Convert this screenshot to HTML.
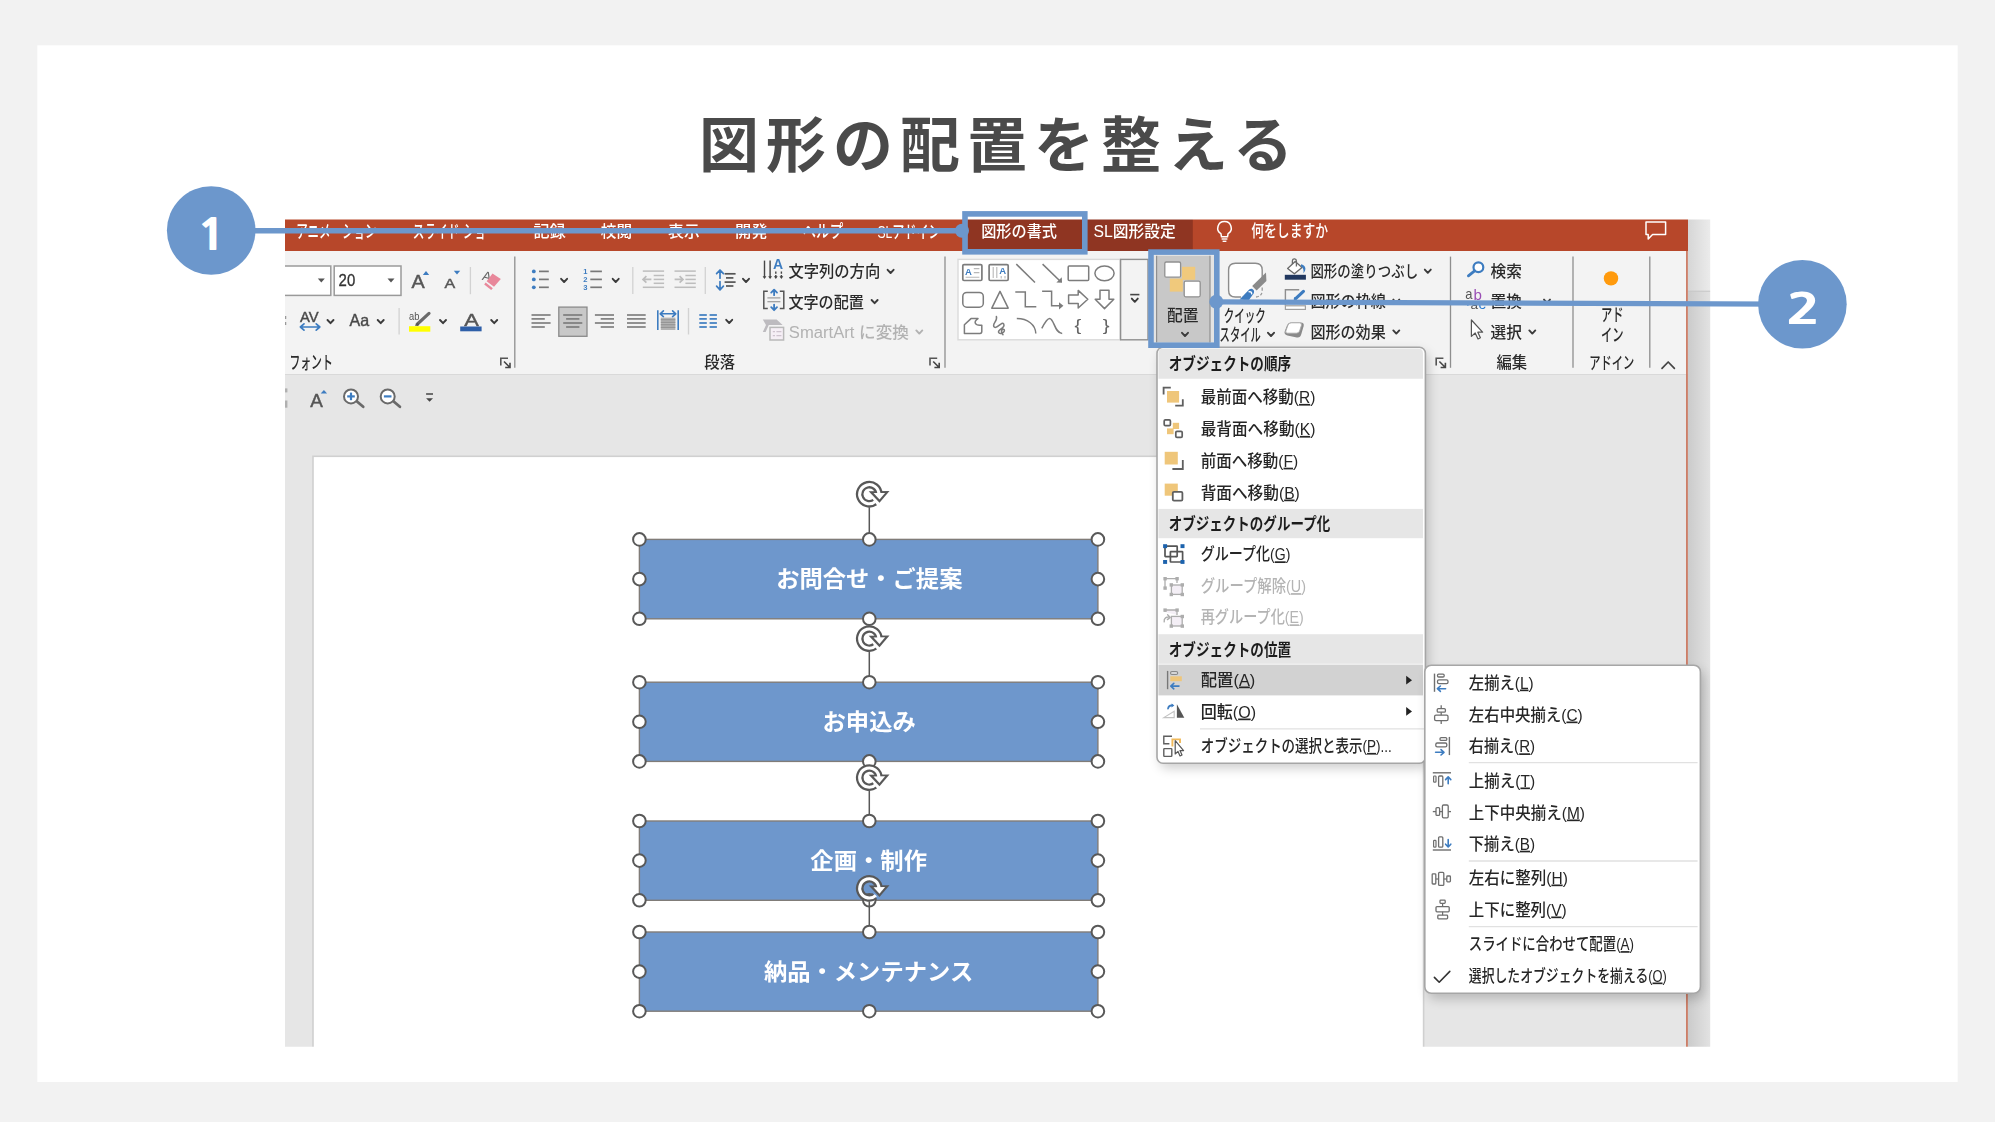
<!DOCTYPE html>
<html lang="ja"><head><meta charset="utf-8"><title>図形の配置を整える</title>
<style>
html,body{margin:0;padding:0;background:#f2f2f2;}
body{width:1995px;height:1122px;overflow:hidden;font-family:"Liberation Sans","Noto Sans CJK JP",sans-serif;}
svg{display:block}
svg text{font-family:"Liberation Sans","Noto Sans CJK JP",sans-serif;white-space:pre}
</style></head><body>
<svg width="1995" height="1122" viewBox="0 0 1995 1122">
<defs><linearGradient id="shR" gradientUnits="userSpaceOnUse" x1="1688" x2="1710" y1="0" y2="0"><stop offset="0" stop-color="#d6d6d6"/><stop offset="1" stop-color="#ebebeb"/></linearGradient><linearGradient id="shR2" gradientUnits="userSpaceOnUse" x1="1688" x2="1710" y1="0" y2="0"><stop offset="0" stop-color="#cbcbcb"/><stop offset="1" stop-color="#e2e2e2"/></linearGradient><filter id="mshadow" x="-10%" y="-10%" width="125%" height="125%"><feGaussianBlur stdDeviation="6"/></filter><filter id="soft" x="0" y="0" width="100%" height="100%" filterUnits="userSpaceOnUse"><feGaussianBlur stdDeviation="0.55"/></filter><clipPath id="shot"><rect x="285" y="219.4" width="1425.2" height="827.3"/></clipPath></defs>
<rect x="0.0" y="0.0" width="1995.0" height="1122.0" fill="#f2f2f2"/>
<rect x="37.3" y="45.3" width="1920.4" height="1036.7" fill="#ffffff"/>
<text x="999.5" y="166.7" text-anchor="middle" font-size="60" font-weight="700" fill="#4a4a4a" letter-spacing="7" style='font-family:"Noto Sans CJK JP","Liberation Sans",sans-serif'>図形の配置を整える</text>
<g clip-path="url(#shot)"><g filter="url(#soft)">
<rect x="278.0" y="251.0" width="1410.0" height="123.1" fill="#f3f3f3"/>
<rect x="278.0" y="374.1" width="1410.0" height="679.9" fill="#e6e6e6"/>
<line x1="278.0" y1="374.5" x2="1686.0" y2="374.5" stroke="#d9d9d9" stroke-width="1.1"/>
<rect x="313.0" y="456.3" width="1110.6" height="599.7" fill="#ffffff" stroke="#d0d0d0" stroke-width="1.6"/>
<rect x="278.0" y="212.0" width="1410.0" height="39.0" fill="#b7472a"/>
<rect x="1688.0" y="212.0" width="28.0" height="79.2" fill="url(#shR)"/>
<rect x="1688.0" y="291.2" width="28.0" height="762.8" fill="url(#shR2)"/>
<line x1="1688.0" y1="291.2" x2="1716.0" y2="291.2" stroke="#c4c4c4" stroke-width="1"/>
<rect x="1686.1" y="251.0" width="1.7" height="803.0" fill="#c9735a"/>
<rect x="968.0" y="212.0" width="224.8" height="39.0" fill="#8f3621"/>
<text x="296.3" y="238.1" font-size="17.8" fill="#ffffff" font-weight="500" textLength="80.2" lengthAdjust="spacingAndGlyphs">アニメーション</text>
<text x="412.8" y="238.1" font-size="17.8" fill="#ffffff" font-weight="500" textLength="84.8" lengthAdjust="spacingAndGlyphs">スライド ショー</text>
<text x="533.6" y="237.4" font-size="16" fill="#ffffff" font-weight="500" textLength="32.1" lengthAdjust="spacingAndGlyphs">記録</text>
<text x="600.8" y="237.4" font-size="16" fill="#ffffff" font-weight="500" textLength="31.3" lengthAdjust="spacingAndGlyphs">校閲</text>
<text x="668.0" y="237.4" font-size="16" fill="#ffffff" font-weight="500" textLength="31.8" lengthAdjust="spacingAndGlyphs">表示</text>
<text x="734.9" y="237.4" font-size="16" fill="#ffffff" font-weight="500" textLength="32.6" lengthAdjust="spacingAndGlyphs">開発</text>
<text x="802.6" y="238.1" font-size="17.8" fill="#ffffff" font-weight="500" textLength="40.6" lengthAdjust="spacingAndGlyphs">ヘルプ</text>
<text x="877.4" y="237.9" font-size="17.4" fill="#ffffff" font-weight="500" textLength="63.2" lengthAdjust="spacingAndGlyphs">SLアドイン</text>
<text x="981.2" y="237.4" font-size="16" fill="#ffffff" font-weight="500" textLength="75.8" lengthAdjust="spacingAndGlyphs">図形の書式</text>
<text x="1093.5" y="237.4" font-size="16" fill="#ffffff" font-weight="500" textLength="82.1" lengthAdjust="spacingAndGlyphs">SL図形設定</text>
<text x="1251.3" y="236.6" font-size="16.8" fill="#ffffff" font-weight="500" textLength="76.7" lengthAdjust="spacingAndGlyphs">何をしますか</text>
<path d="M1224.5 221.5 a6.6 6.6 0 0 1 3.6 12.2 l-0.6 3.0 h-6 l-0.6 -3.0 a6.6 6.6 0 0 1 3.6 -12.2 z" fill="none" stroke="#ffffff" stroke-width="1.5"/>
<line x1="1221.6" y1="239.0" x2="1227.4" y2="239.0" stroke="#ffffff" stroke-width="1.4"/>
<line x1="1222.6" y1="241.3" x2="1226.4" y2="241.3" stroke="#ffffff" stroke-width="1.4"/>
<path d="M1646 222 h19.6 v12.4 h-13 l-4.4 4.6 v-4.6 h-2.2 z" fill="none" stroke="#ffffff" stroke-width="1.5" stroke-linejoin="round"/>
<rect x="282.0" y="266.0" width="48.8" height="29.4" fill="#fff" stroke="#9a9a9a" stroke-width="1.5"/>
<rect x="334.2" y="266.0" width="66.8" height="29.4" fill="#fff" stroke="#9a9a9a" stroke-width="1.5"/>
<path d="M317.8 278.6 h7 l-3.5 4 z" fill="#555"/>
<path d="M387.5 278.6 h7 l-3.5 4 z" fill="#555"/>
<text x="338.6" y="286.4" font-size="16" fill="#333" font-weight="500" textLength="16.6" lengthAdjust="spacingAndGlyphs" stroke="#333" stroke-width="0.3">20</text>
<text x="411.6" y="287.9" font-size="17.6" fill="#555" font-weight="500" textLength="13.2" lengthAdjust="spacingAndGlyphs" stroke="#555" stroke-width="0.45">A</text>
<path d="M422.8 274.9 h6.4 l-3.2 -3.8 z" fill="#3d7cc0"/>
<text x="444.5" y="287.9" font-size="13.7" fill="#555" font-weight="500" textLength="10.7" lengthAdjust="spacingAndGlyphs" stroke="#555" stroke-width="0.45">A</text>
<path d="M453.8 270.7 h6.4 l-3.2 3.8 z" fill="#3d7cc0"/>
<line x1="470.4" y1="267.0" x2="470.4" y2="294.2" stroke="#d2d2d2" stroke-width="1.3"/>
<text x="482.5" y="281" font-size="13.5" fill="#666" transform="rotate(14 487 276)">A</text>
<path d="M492.5 273.6 L500.8 279 L494 286.8 L486.6 281.2 Z" fill="#e8879a"/>
<path d="M485.6 282.6 L492.8 288.2 L491.2 290 L484.2 284.4 Z" fill="#e8879a"/>
<line x1="514.8" y1="256.6" x2="514.8" y2="367.8" stroke="#8e8e8e" stroke-width="1.3"/>
<path d="M285.5 316 v3 M285.5 322 v3" fill="none" stroke="#999" stroke-width="1.5"/>
<text x="300.0" y="321.7" font-size="14.2" fill="#444" font-weight="500" textLength="18.6" lengthAdjust="spacingAndGlyphs" stroke="#555" stroke-width="0.45">AV</text>
<path d="M300.6 327 H319.6 M304 323.8 L300.4 327 L304 330.2 M316.2 323.8 L319.8 327 L316.2 330.2" fill="none" stroke="#3d7cc0" stroke-width="1.7" stroke-linecap="round" stroke-linejoin="round"/>
<path d="M327.5 320.0 L330.5 323.2 L333.5 320.0" fill="none" stroke="#3a3a3a" stroke-width="1.9" stroke-linecap="round" stroke-linejoin="round"/>
<text x="349.6" y="325.9" font-size="16.5" fill="#444" font-weight="500" textLength="19.6" lengthAdjust="spacingAndGlyphs" stroke="#555" stroke-width="0.45">Aa</text>
<path d="M377.7 320.0 L380.7 323.2 L383.7 320.0" fill="none" stroke="#3a3a3a" stroke-width="1.9" stroke-linecap="round" stroke-linejoin="round"/>
<line x1="399.1" y1="308.0" x2="399.1" y2="334.5" stroke="#d2d2d2" stroke-width="1.3"/>
<text x="409.0" y="319.8" font-size="11" fill="#555" font-weight="500" textLength="10.4" lengthAdjust="spacingAndGlyphs">ab</text>
<path d="M429 313.4 L417.2 324.2" fill="none" stroke="#6a6a6a" stroke-width="3.2" stroke-linecap="round"/>
<path d="M417.8 322.6 L414.6 325.8 L419.2 325.2 Z" fill="#555"/>
<rect x="409.0" y="326.2" width="21.3" height="5.5" fill="#ffff00"/>
<path d="M440.0 320.0 L443.0 323.2 L446.0 320.0" fill="none" stroke="#3a3a3a" stroke-width="1.9" stroke-linecap="round" stroke-linejoin="round"/>
<text x="464.2" y="325.9" font-size="17.4" fill="#555" font-weight="500" textLength="14.6" lengthAdjust="spacingAndGlyphs" stroke="#555" stroke-width="0.45">A</text>
<rect x="460.2" y="326.5" width="21.4" height="4.8" fill="#2f5fa8"/>
<path d="M491.2 320.0 L494.2 323.2 L497.2 320.0" fill="none" stroke="#3a3a3a" stroke-width="1.9" stroke-linecap="round" stroke-linejoin="round"/>
<text x="289.4" y="369.0" font-size="18" fill="#2b2b2b" font-weight="500" textLength="43.4" lengthAdjust="spacingAndGlyphs">フォント</text>
<path d="M500.8 365.5 V358.3 H508.0" fill="none" stroke="#555" stroke-width="1.6"/>
<path d="M504.0 361.5 L510.0 367.5 M510.0 362.7 V367.5 H505.2" fill="none" stroke="#444" stroke-width="1.6"/>
<circle cx="533.8" cy="271.4" r="1.9" fill="#3d7cc0"/>
<line x1="539.0" y1="271.4" x2="548.8" y2="271.4" stroke="#787878" stroke-width="1.7"/>
<line x1="590.3" y1="271.4" x2="601.9" y2="271.4" stroke="#787878" stroke-width="1.7"/>
<circle cx="533.8" cy="279.4" r="1.9" fill="#3d7cc0"/>
<line x1="539.0" y1="279.4" x2="548.8" y2="279.4" stroke="#787878" stroke-width="1.7"/>
<line x1="590.3" y1="279.4" x2="601.9" y2="279.4" stroke="#787878" stroke-width="1.7"/>
<circle cx="533.8" cy="287.3" r="1.9" fill="#3d7cc0"/>
<line x1="539.0" y1="287.3" x2="548.8" y2="287.3" stroke="#787878" stroke-width="1.7"/>
<line x1="590.3" y1="287.3" x2="601.9" y2="287.3" stroke="#787878" stroke-width="1.7"/>
<text x="583.2" y="274.0" font-size="7.6" font-weight="700" fill="#3d7cc0">1</text>
<text x="583.2" y="282.0" font-size="7.6" font-weight="700" fill="#3d7cc0">2</text>
<text x="583.2" y="289.9" font-size="7.6" font-weight="700" fill="#3d7cc0">3</text>
<path d="M561.1 278.8 L564.1 282.0 L567.1 278.8" fill="none" stroke="#3a3a3a" stroke-width="1.9" stroke-linecap="round" stroke-linejoin="round"/>
<path d="M612.7 278.8 L615.7 282.0 L618.7 278.8" fill="none" stroke="#3a3a3a" stroke-width="1.9" stroke-linecap="round" stroke-linejoin="round"/>
<line x1="632.8" y1="267.0" x2="632.8" y2="294.0" stroke="#d2d2d2" stroke-width="1.3"/>
<line x1="642.8" y1="271.1" x2="664.1" y2="271.1" stroke="#bdbdbd" stroke-width="1.5"/>
<line x1="674.5" y1="271.1" x2="695.8" y2="271.1" stroke="#bdbdbd" stroke-width="1.5"/>
<line x1="653.7" y1="275.5" x2="664.1" y2="275.5" stroke="#bdbdbd" stroke-width="1.5"/>
<line x1="685.4" y1="275.5" x2="695.8" y2="275.5" stroke="#bdbdbd" stroke-width="1.5"/>
<line x1="653.7" y1="279.4" x2="664.1" y2="279.4" stroke="#bdbdbd" stroke-width="1.5"/>
<line x1="685.4" y1="279.4" x2="695.8" y2="279.4" stroke="#bdbdbd" stroke-width="1.5"/>
<line x1="653.7" y1="283.3" x2="664.1" y2="283.3" stroke="#bdbdbd" stroke-width="1.5"/>
<line x1="685.4" y1="283.3" x2="695.8" y2="283.3" stroke="#bdbdbd" stroke-width="1.5"/>
<line x1="642.8" y1="287.3" x2="664.1" y2="287.3" stroke="#bdbdbd" stroke-width="1.5"/>
<line x1="674.5" y1="287.3" x2="695.8" y2="287.3" stroke="#bdbdbd" stroke-width="1.5"/>
<path d="M651.4 279.4 H643.2 M646.4 276.2 L643 279.4 L646.4 282.6" fill="none" stroke="#bdbdbd" stroke-width="1.7"/>
<path d="M674.6 279.4 H682.8 M679.6 276.2 L683 279.4 L679.6 282.6" fill="none" stroke="#bdbdbd" stroke-width="1.7"/>
<line x1="705.3" y1="267.0" x2="705.3" y2="294.0" stroke="#d2d2d2" stroke-width="1.3"/>
<path d="M720 270.6 V278.2 M716.6 273.6 L720 270 L723.4 273.6 M720 281.6 V289.2 M716.6 286.2 L720 289.8 L723.4 286.2" fill="none" stroke="#3d7cc0" stroke-width="1.7" stroke-linecap="round" stroke-linejoin="round"/>
<line x1="724.6" y1="273.8" x2="735.6" y2="273.8" stroke="#555" stroke-width="1.7"/>
<line x1="726.0" y1="277.9" x2="733.4" y2="277.9" stroke="#555" stroke-width="1.7"/>
<line x1="724.6" y1="282.1" x2="735.6" y2="282.1" stroke="#555" stroke-width="1.7"/>
<line x1="726.0" y1="286.0" x2="733.4" y2="286.0" stroke="#555" stroke-width="1.7"/>
<path d="M743.0 278.8 L746.0 282.0 L749.0 278.8" fill="none" stroke="#3a3a3a" stroke-width="1.9" stroke-linecap="round" stroke-linejoin="round"/>
<line x1="531.5" y1="315.0" x2="550.6" y2="315.0" stroke="#787878" stroke-width="1.6"/>
<line x1="531.5" y1="318.9" x2="544.8" y2="318.9" stroke="#787878" stroke-width="1.6"/>
<line x1="531.5" y1="323.0" x2="550.6" y2="323.0" stroke="#787878" stroke-width="1.6"/>
<line x1="531.5" y1="327.0" x2="544.8" y2="327.0" stroke="#787878" stroke-width="1.6"/>
<rect x="558.8" y="307.1" width="28.2" height="29.2" fill="#c8c8c8" stroke="#8a8a8a" stroke-width="1.3"/>
<line x1="563.2" y1="315.0" x2="582.3" y2="315.0" stroke="#787878" stroke-width="1.6"/>
<line x1="566.1" y1="318.9" x2="579.4" y2="318.9" stroke="#787878" stroke-width="1.6"/>
<line x1="563.2" y1="323.0" x2="582.3" y2="323.0" stroke="#787878" stroke-width="1.6"/>
<line x1="566.1" y1="327.0" x2="579.4" y2="327.0" stroke="#787878" stroke-width="1.6"/>
<line x1="594.9" y1="315.0" x2="614.0" y2="315.0" stroke="#787878" stroke-width="1.6"/>
<line x1="600.7" y1="318.9" x2="614.0" y2="318.9" stroke="#787878" stroke-width="1.6"/>
<line x1="594.9" y1="323.0" x2="614.0" y2="323.0" stroke="#787878" stroke-width="1.6"/>
<line x1="600.7" y1="327.0" x2="614.0" y2="327.0" stroke="#787878" stroke-width="1.6"/>
<line x1="627.0" y1="315.0" x2="645.7" y2="315.0" stroke="#787878" stroke-width="1.6"/>
<line x1="627.0" y1="318.9" x2="645.7" y2="318.9" stroke="#787878" stroke-width="1.6"/>
<line x1="627.0" y1="323.0" x2="645.7" y2="323.0" stroke="#787878" stroke-width="1.6"/>
<line x1="627.0" y1="327.0" x2="645.7" y2="327.0" stroke="#787878" stroke-width="1.6"/>
<line x1="657.8" y1="310.3" x2="657.8" y2="330.0" stroke="#3d7cc0" stroke-width="1.6"/>
<line x1="678.2" y1="310.3" x2="678.2" y2="330.0" stroke="#3d7cc0" stroke-width="1.6"/>
<path d="M660.4 313.8 H675.6 M663.4 310.9 L660.2 313.8 L663.4 316.7 M672.6 310.9 L675.8 313.8 L672.6 316.7" fill="none" stroke="#3d7cc0" stroke-width="1.6" stroke-linecap="round" stroke-linejoin="round"/>
<rect x="660.8" y="317.6" width="14.6" height="12.4" fill="#b4b4b4"/>
<line x1="660.8" y1="319.8" x2="675.4" y2="319.8" stroke="#8a8a8a" stroke-width="0.9"/>
<line x1="660.8" y1="322.3" x2="675.4" y2="322.3" stroke="#8a8a8a" stroke-width="0.9"/>
<line x1="660.8" y1="324.8" x2="675.4" y2="324.8" stroke="#8a8a8a" stroke-width="0.9"/>
<line x1="660.8" y1="327.3" x2="675.4" y2="327.3" stroke="#8a8a8a" stroke-width="0.9"/>
<line x1="688.5" y1="308.0" x2="688.5" y2="334.5" stroke="#d2d2d2" stroke-width="1.3"/>
<line x1="699.3" y1="315.0" x2="706.8" y2="315.0" stroke="#3d7cc0" stroke-width="1.7"/>
<line x1="709.6" y1="315.0" x2="716.9" y2="315.0" stroke="#3d7cc0" stroke-width="1.7"/>
<line x1="699.3" y1="318.9" x2="706.8" y2="318.9" stroke="#3d7cc0" stroke-width="1.7"/>
<line x1="709.6" y1="318.9" x2="716.9" y2="318.9" stroke="#3d7cc0" stroke-width="1.7"/>
<line x1="699.3" y1="323.0" x2="706.8" y2="323.0" stroke="#3d7cc0" stroke-width="1.7"/>
<line x1="709.6" y1="323.0" x2="716.9" y2="323.0" stroke="#3d7cc0" stroke-width="1.7"/>
<line x1="699.3" y1="327.0" x2="706.8" y2="327.0" stroke="#3d7cc0" stroke-width="1.7"/>
<line x1="709.6" y1="327.0" x2="716.9" y2="327.0" stroke="#3d7cc0" stroke-width="1.7"/>
<path d="M726.2 319.8 L729.2 323.0 L732.2 319.8" fill="none" stroke="#3a3a3a" stroke-width="1.9" stroke-linecap="round" stroke-linejoin="round"/>
<text x="704.3" y="368.4" font-size="15.5" fill="#2b2b2b" font-weight="500" textLength="30.7" lengthAdjust="spacingAndGlyphs">段落</text>
<path d="M930.0 365.5 V358.3 H937.2" fill="none" stroke="#555" stroke-width="1.6"/>
<path d="M933.2 361.5 L939.2 367.5 M939.2 362.7 V367.5 H934.4" fill="none" stroke="#444" stroke-width="1.6"/>
<line x1="764.5" y1="260.6" x2="764.5" y2="277.6" stroke="#444" stroke-width="1.4"/>
<path d="M762.6 276.2 L764.5 279 L766.4 276.2 Z" fill="#444"/>
<line x1="770.1" y1="260.6" x2="770.1" y2="277.6" stroke="#444" stroke-width="1.4"/>
<path d="M768.2 276.2 L770.1 279 L772.0 276.2 Z" fill="#444"/>
<line x1="775.8" y1="271.6" x2="775.8" y2="277.6" stroke="#444" stroke-width="1.4" stroke-dasharray="2.2 1.2"/>
<path d="M773.9 276.2 L775.8 279 L777.6999999999999 276.2 Z" fill="#444"/>
<line x1="781.4" y1="271.6" x2="781.4" y2="277.6" stroke="#444" stroke-width="1.4" stroke-dasharray="2.2 1.2"/>
<path d="M779.5 276.2 L781.4 279 L783.3 276.2 Z" fill="#444"/>
<text x="773" y="269.2" font-size="14" font-weight="700" fill="#3d7cc0">A</text>
<text x="788.4" y="277.0" font-size="16" fill="#2b2b2b" font-weight="500" textLength="91.8" lengthAdjust="spacingAndGlyphs">文字列の方向</text>
<path d="M887.6 269.8 L890.6 273.0 L893.6 269.8" fill="none" stroke="#3a3a3a" stroke-width="1.9" stroke-linecap="round" stroke-linejoin="round"/>
<path d="M767.8 291.2 H763.8 V308.6 H767.8 M779.8 291.2 H783.8 V308.6 H779.8" fill="none" stroke="#555" stroke-width="1.5"/>
<path d="M774.1 290 V295.2 M771.2 292.6 L774.1 289.6 L777 292.6" fill="none" stroke="#3d7cc0" stroke-width="1.8" stroke-linecap="round" stroke-linejoin="round"/>
<path d="M774.1 304.6 V309.8 M771.2 307.2 L774.1 310.2 L777 307.2" fill="none" stroke="#3d7cc0" stroke-width="1.8" stroke-linecap="round" stroke-linejoin="round"/>
<line x1="767.4" y1="297.9" x2="780.4" y2="297.9" stroke="#9a9a9a" stroke-width="1.2"/>
<line x1="767.4" y1="301.7" x2="780.4" y2="301.7" stroke="#9a9a9a" stroke-width="1.2"/>
<text x="788.4" y="307.6" font-size="16" fill="#2b2b2b" font-weight="500" textLength="75.5" lengthAdjust="spacingAndGlyphs">文字の配置</text>
<path d="M871.6 300.0 L874.6 303.2 L877.6 300.0" fill="none" stroke="#3a3a3a" stroke-width="1.9" stroke-linecap="round" stroke-linejoin="round"/>
<path d="M762.8 319.4 H776.6 L782.6 325 H768.8 L765.6 332 H762.8 L766 325 Z" fill="#bdbbbf"/>
<rect x="770.0" y="327.4" width="13.6" height="12.6" fill="#f6eff6" stroke="#b9b9b9" stroke-width="1.5"/>
<path d="M772.8 331.6 h2.2 M776.4 331.6 h5 M772.8 335.6 h2.2 M776.4 335.6 h5" fill="none" stroke="#cfc3cf" stroke-width="1.2"/>
<text x="788.8" y="337.8" font-size="16" fill="#b2b2b2" font-weight="500" textLength="120.1" lengthAdjust="spacingAndGlyphs">SmartArt に変換</text>
<path d="M916.3 330.4 L919.3 333.6 L922.3 330.4" fill="none" stroke="#b2b2b2" stroke-width="1.9" stroke-linecap="round" stroke-linejoin="round"/>
<line x1="945.0" y1="256.6" x2="945.0" y2="367.8" stroke="#8e8e8e" stroke-width="1.3"/>
<rect x="958.0" y="259.4" width="162.0" height="80.4" fill="#ffffff" stroke="#dadada" stroke-width="1.4"/>
<rect x="1120.6" y="259.4" width="27.4" height="80.4" fill="#f3f3f3" stroke="#8f8f8f" stroke-width="1.4"/>
<line x1="1130.2" y1="294.6" x2="1139.4" y2="294.6" stroke="#444" stroke-width="1.6"/>
<path d="M1131.8 298.6 L1134.8 301.8 L1137.8 298.6" fill="none" stroke="#3a3a3a" stroke-width="1.9" stroke-linecap="round" stroke-linejoin="round"/>
<rect x="962.8" y="264.6" width="19.1" height="15.9" fill="#fff" stroke="#7c7c7c" stroke-width="1.7" rx="1.2"/>
<text x="965" y="274.6" font-size="9.5" font-weight="700" fill="#3d7cc0">A</text>
<path d="M973.8 268.6 h5.6 M973.8 272.6 h5.6 M965.6 277.2 h13.8" fill="none" stroke="#b8b8b8" stroke-width="1.1"/>
<rect x="989.1" y="264.6" width="19.1" height="15.9" fill="#fff" stroke="#7c7c7c" stroke-width="1.7" rx="1.2"/>
<path d="M993.2 267 v11 M996.8 267 v11" fill="none" stroke="#b8b8b8" stroke-width="1.1"/>
<text x="999.2" y="274.4" font-size="9.5" font-weight="700" fill="#3d7cc0">A</text>
<path d="M1001.2 276 v2.6 M1005 276 v2.6" fill="none" stroke="#b8b8b8" stroke-width="1.1"/>
<line x1="1016.3" y1="264.1" x2="1035.0" y2="282.5" stroke="#7c7c7c" stroke-width="1.5"/>
<path d="M1042.6 264.1 L1060 281" fill="none" stroke="#7c7c7c" stroke-width="1.5"/>
<path d="M1062 282.8 L1061.8 277.2 L1056.4 282.4 Z" fill="#7c7c7c"/>
<rect x="1068.2" y="265.9" width="20.5" height="14.6" fill="none" stroke="#7c7c7c" stroke-width="1.5" rx="1"/>
<ellipse cx="1104.5" cy="273.3" rx="9.6" ry="7.4" fill="none" stroke="#7c7c7c" stroke-width="1.5"/>
<rect x="962.8" y="292.4" width="20.5" height="14.8" fill="none" stroke="#7c7c7c" stroke-width="1.5" rx="4"/>
<path d="M1000 291.4 L1008.2 308.2 H991.8 Z" fill="none" stroke="#7c7c7c" stroke-width="1.5" stroke-linejoin="round" stroke-linecap="round"/>
<path d="M1015.3 292 H1025.3 V306.8 H1036.3" fill="none" stroke="#7c7c7c" stroke-width="1.5"/>
<path d="M1042.1 291.2 H1051.6 V305.8 H1060" fill="none" stroke="#7c7c7c" stroke-width="1.5"/>
<path d="M1063.4 305.8 L1059 302.2 V309.4 Z" fill="#7c7c7c"/>
<path d="M1068.6 295 H1078.2 V290.4 L1087.8 299.2 L1078.2 308 V303.4 H1068.6 Z" fill="none" stroke="#7c7c7c" stroke-width="1.5" stroke-linejoin="round" stroke-linecap="round"/>
<path d="M1100 290.2 H1109 V299.2 H1113.8 L1104.5 308.6 L1095.2 299.2 H1100 Z" fill="none" stroke="#7c7c7c" stroke-width="1.5" stroke-linejoin="round" stroke-linecap="round"/>
<path d="M964.4 324.8 L971 318.6 H978 C973.4 321.6 974.2 326 981.8 325.2 V331.6 Q981.8 333.4 980 333.4 H964.4 Z" fill="none" stroke="#7c7c7c" stroke-width="1.5" stroke-linejoin="round" stroke-linecap="round"/>
<path d="M996.4 316.4 C998 321 991 324.4 994.4 327.2 C997.8 329 1001.6 320.6 1003.8 324.2 C1005.6 328.2 997.4 329.4 998.6 332.4 C1000.2 335.4 1005.6 331.6 1004.2 329.6 C1002.6 328 999.8 331 1003 334.8" fill="none" stroke="#7c7c7c" stroke-width="1.5" stroke-linejoin="round" stroke-linecap="round"/>
<path d="M1016.8 318.6 C1027.6 318.6 1035.6 324.6 1035.8 333.6" fill="none" stroke="#7c7c7c" stroke-width="1.5"/>
<path d="M1041.8 328.4 C1045.2 321.6 1047.2 318.4 1049.6 318.4 C1054 318.4 1054.6 333.4 1062.2 333.4" fill="none" stroke="#7c7c7c" stroke-width="1.5"/>
<text x="1074.4" y="331.3" font-size="17" fill="#666" font-weight="500" textLength="6.8" lengthAdjust="spacingAndGlyphs">{</text>
<text x="1102.8" y="331.3" font-size="17" fill="#666" font-weight="500" textLength="6.8" lengthAdjust="spacingAndGlyphs">}</text>
<rect x="1153.6" y="255.4" width="60.4" height="87.0" fill="#e3e3e3"/>
<rect x="1156.6" y="255.8" width="53.4" height="86.6" fill="#c8c8c8"/>
<line x1="1156.6" y1="255.8" x2="1156.6" y2="342.4" stroke="#8f8f8f" stroke-width="1.2"/>
<line x1="1210.0" y1="255.8" x2="1210.0" y2="342.4" stroke="#8f8f8f" stroke-width="1.2"/>
<rect x="1169.8" y="266.8" width="25.4" height="24.8" fill="#f0c97b"/>
<rect x="1163.4" y="260.8" width="18.6" height="17.8" fill="#c8c8c8"/>
<rect x="1182.8" y="279.8" width="18.8" height="18.4" fill="#c8c8c8"/>
<rect x="1164.8" y="262.0" width="15.8" height="15.2" fill="#fff" stroke="#909090" stroke-width="1.3" rx="1.5"/>
<rect x="1184.2" y="281.2" width="16.0" height="15.6" fill="#fff" stroke="#909090" stroke-width="1.3" rx="1.5"/>
<text x="1167.1" y="321.0" font-size="16" fill="#2b2b2b" font-weight="500" textLength="31.5" lengthAdjust="spacingAndGlyphs">配置</text>
<path d="M1182.0 332.8 L1185.0 336.0 L1188.0 332.8" fill="none" stroke="#3a3a3a" stroke-width="1.9" stroke-linecap="round" stroke-linejoin="round"/>
<path d="M1241 297 H1235.4 Q1228.6 297 1228.6 290.2 V270 Q1228.6 263.2 1235.4 263.2 H1255.4 Q1262.2 263.2 1262.2 270 V279" fill="#fff" stroke="#8c8c8c" stroke-width="1.4"/>
<path d="M1262.2 287.6 V290.2 Q1262.2 296.4 1256 297" fill="none" stroke="#9a9a9a" stroke-width="1.3" stroke-dasharray="3 2"/>
<path d="M1266 272.6 L1266.4 281 L1256.6 290.4 L1252.2 286 Z" fill="#8a8a8a"/>
<path d="M1251.4 287 L1255.6 291.4 L1253.8 293.2 L1249.6 288.8 Z" fill="#fff"/>
<path d="M1249.2 289.4 C1252.4 287.6 1255.4 290.6 1253.6 293.6 L1248.6 300.4 L1239.6 299.6 Z" fill="#3d7cc0"/>
<path d="M1248.6 292 C1250.6 291 1252.4 292.6 1251.4 294.4" fill="none" stroke="#fff" stroke-width="1.4"/>
<text x="1223.8" y="321.6" font-size="17.6" fill="#2b2b2b" font-weight="500" textLength="42.1" lengthAdjust="spacingAndGlyphs">クイック</text>
<text x="1219.6" y="340.9" font-size="17.6" fill="#2b2b2b" font-weight="500" textLength="41.2" lengthAdjust="spacingAndGlyphs">スタイル</text>
<path d="M1268.0 332.8 L1271.0 336.0 L1274.0 332.8" fill="none" stroke="#3a3a3a" stroke-width="1.9" stroke-linecap="round" stroke-linejoin="round"/>
<path d="M1295.2 261.4 L1302 267.4 L1294.4 273.8 L1287.6 268.4 Z" fill="#fff" stroke="#6a6a6a" stroke-width="1.3" stroke-linejoin="round" stroke-linecap="round"/>
<path d="M1292.4 264 V261 Q1292.6 258.6 1294.6 258.8 Q1296.4 259 1296.4 261 V266.4" fill="none" stroke="#6a6a6a" stroke-width="1.3"/>
<path d="M1301 264.2 C1305.6 265.4 1307 269 1303.4 273.2 C1304 270 1303.2 267.6 1301 266.4 Z" fill="#3d7cc0"/>
<rect x="1284.8" y="274.8" width="21.1" height="4.9" fill="#22375f"/>
<text x="1310.4" y="277.2" font-size="16" fill="#2b2b2b" font-weight="500" textLength="107.7" lengthAdjust="spacingAndGlyphs">図形の塗りつぶし</text>
<path d="M1424.8 269.6 L1427.8 272.8 L1430.8 269.6" fill="none" stroke="#3a3a3a" stroke-width="1.9" stroke-linecap="round" stroke-linejoin="round"/>
<path d="M1299.2 289.8 H1285.4 V305.6" fill="none" stroke="#8f8f8f" stroke-width="1.4"/>
<rect x="1285.4" y="305.8" width="20.0" height="3.6" fill="#fff" stroke="#a0a0a0" stroke-width="1.2"/>
<path d="M1303.4 291.4 L1295.4 298.8" fill="none" stroke="#3d7cc0" stroke-width="3.2" stroke-linecap="round"/>
<path d="M1296.6 297.6 L1293.6 300.8 L1294.4 297 Z" fill="#3d7cc0"/>
<text x="1310.4" y="307.2" font-size="16" fill="#2b2b2b" font-weight="500" textLength="75.4" lengthAdjust="spacingAndGlyphs">図形の枠線</text>
<path d="M1393.3 299.6 L1396.3 302.8 L1399.3 299.6" fill="none" stroke="#3a3a3a" stroke-width="1.9" stroke-linecap="round" stroke-linejoin="round"/>
<path d="M1291.4 322.4 H1300.6 Q1304.6 322.4 1303.6 326.2 L1301.2 334.6 Q1300.2 338 1296.8 337.4 L1287.4 335.4 Q1283.6 334.4 1284.8 331 L1287 325.4 Q1288.2 322.4 1291.4 322.4 Z" fill="#8a8a8a"/>
<path d="M1291.6 322.8 H1299.4 Q1302.2 322.8 1301.4 325.4 L1299.6 331 Q1298.8 333.2 1296.4 333.2 L1287.6 333.2 Q1285 333.2 1285.8 331 L1288 325 Q1288.8 322.8 1291.6 322.8 Z" fill="#fff" stroke="#a8a8a8" stroke-width="0.9"/>
<text x="1310.4" y="337.9" font-size="16" fill="#2b2b2b" font-weight="500" textLength="75.4" lengthAdjust="spacingAndGlyphs">図形の効果</text>
<path d="M1393.3 330.4 L1396.3 333.6 L1399.3 330.4" fill="none" stroke="#3a3a3a" stroke-width="1.9" stroke-linecap="round" stroke-linejoin="round"/>
<path d="M1436.2 365.5 V358.3 H1443.4" fill="none" stroke="#555" stroke-width="1.6"/>
<path d="M1439.4 361.5 L1445.4 367.5 M1445.4 362.7 V367.5 H1440.6" fill="none" stroke="#444" stroke-width="1.6"/>
<line x1="1450.5" y1="256.6" x2="1450.5" y2="367.8" stroke="#8e8e8e" stroke-width="1.3"/>
<circle cx="1478.4" cy="267.2" r="4.9" fill="#fff" stroke="#3d7cc0" stroke-width="2.2"/>
<line x1="1474.6" y1="270.8" x2="1468.4" y2="275.8" stroke="#3d7cc0" stroke-width="2.8" stroke-linecap="round"/>
<text x="1490.6" y="277.2" font-size="16" fill="#2b2b2b" font-weight="500" textLength="31.4" lengthAdjust="spacingAndGlyphs">検索</text>
<text x="1465.2" y="299.2" font-size="15" fill="#555" font-weight="500" textLength="7.2" lengthAdjust="spacingAndGlyphs">a</text>
<text x="1473.4" y="299.6" font-size="15" fill="#9a4fb5" font-weight="500" textLength="8.4" lengthAdjust="spacingAndGlyphs">b</text>
<text x="1470.4" y="309.1" font-size="12" fill="#555" font-weight="500" textLength="7.6" lengthAdjust="spacingAndGlyphs">a</text>
<text x="1478.6" y="309.3" font-size="12.5" fill="#2b7cd3" font-weight="500" textLength="7.4" lengthAdjust="spacingAndGlyphs">c</text>
<path d="M1470.6 303.6 L1466.6 303.6 M1468.4 301.6 L1466.2 303.6 L1468.4 305.6" fill="none" stroke="#2b7cd3" stroke-width="1.3"/>
<text x="1490.6" y="307.2" font-size="16" fill="#2b2b2b" font-weight="500" textLength="31.4" lengthAdjust="spacingAndGlyphs">置換</text>
<path d="M1544.0 299.6 L1547.0 302.8 L1550.0 299.6" fill="none" stroke="#3a3a3a" stroke-width="1.9" stroke-linecap="round" stroke-linejoin="round"/>
<path d="M1471.4 320 V336.4 L1475.2 333 L1478 339 L1480.4 337.8 L1477.8 332.2 H1482.6 Z" fill="#fff" stroke="#555" stroke-width="1.2" stroke-linejoin="round" stroke-linecap="round"/>
<text x="1490.6" y="337.9" font-size="16" fill="#2b2b2b" font-weight="500" textLength="31.4" lengthAdjust="spacingAndGlyphs">選択</text>
<path d="M1529.3 330.4 L1532.3 333.6 L1535.3 330.4" fill="none" stroke="#3a3a3a" stroke-width="1.9" stroke-linecap="round" stroke-linejoin="round"/>
<text x="1496.5" y="368.4" font-size="15.5" fill="#2b2b2b" font-weight="500" textLength="30.7" lengthAdjust="spacingAndGlyphs">編集</text>
<line x1="1573.0" y1="256.6" x2="1573.0" y2="367.8" stroke="#8e8e8e" stroke-width="1.3"/>
<circle cx="1611.0" cy="278.4" r="7.2" fill="#ff9a0a"/>
<text x="1601.0" y="321.2" font-size="17.6" fill="#2b2b2b" font-weight="500" textLength="22.6" lengthAdjust="spacingAndGlyphs">アド</text>
<text x="1601.0" y="341.4" font-size="17.6" fill="#2b2b2b" font-weight="500" textLength="22.6" lengthAdjust="spacingAndGlyphs">イン</text>
<text x="1589.3" y="368.6" font-size="17" fill="#2b2b2b" font-weight="500" textLength="45.1" lengthAdjust="spacingAndGlyphs">アドイン</text>
<line x1="1649.8" y1="256.6" x2="1649.8" y2="367.8" stroke="#8e8e8e" stroke-width="1.3"/>
<path d="M1662 368.4 L1668.2 362 L1674.4 368.4" fill="none" stroke="#444" stroke-width="1.7" stroke-linejoin="round" stroke-linecap="round"/>
<text x="310.2" y="406.9" font-size="18.4" fill="#555" font-weight="500" textLength="12.6" lengthAdjust="spacingAndGlyphs" stroke="#555" stroke-width="0.45">A</text>
<path d="M320.7 393.6 H327.1 L323.9 390 Z" fill="#3d7cc0"/>
<line x1="356.4" y1="401.0" x2="363.2" y2="406.8" stroke="#6a6a6a" stroke-width="2.8" stroke-linecap="round"/>
<circle cx="351.0" cy="396.4" r="7.0" fill="#fff" stroke="#6a6a6a" stroke-width="2"/>
<line x1="347.2" y1="396.4" x2="354.8" y2="396.4" stroke="#3d7cc0" stroke-width="2.2"/>
<line x1="393.1" y1="401.0" x2="399.9" y2="406.8" stroke="#6a6a6a" stroke-width="2.8" stroke-linecap="round"/>
<circle cx="387.7" cy="396.4" r="7.0" fill="#fff" stroke="#6a6a6a" stroke-width="2"/>
<line x1="383.9" y1="396.4" x2="391.5" y2="396.4" stroke="#3d7cc0" stroke-width="2.2"/>
<line x1="351.0" y1="392.6" x2="351.0" y2="400.2" stroke="#3d7cc0" stroke-width="2.2"/>
<line x1="426.1" y1="394.0" x2="433.0" y2="394.0" stroke="#444" stroke-width="1.5"/>
<path d="M426.1 398.2 H433 L429.55 401.8 Z" fill="#444"/>
<rect x="285.0" y="388.4" width="2.4" height="4.0" fill="#b0b0b0"/>
<rect x="285.0" y="400.5" width="2.4" height="7.2" fill="#b0b0b0"/>
<rect x="639.4" y="539.4" width="458.5" height="79.4" fill="#6e97cc" stroke="#807c78" stroke-width="1.4"/>
<text x="776.3" y="587.4" font-size="23" fill="#fff" font-weight="700" style='font-family:"Noto Sans CJK JP","Liberation Sans",sans-serif' textLength="186.1" lengthAdjust="spacingAndGlyphs">お問合せ・ご提案</text>
<rect x="639.4" y="682.2" width="458.5" height="79.2" fill="#6e97cc" stroke="#807c78" stroke-width="1.4"/>
<text x="822.5" y="730.1" font-size="23" fill="#fff" font-weight="700" style='font-family:"Noto Sans CJK JP","Liberation Sans",sans-serif' textLength="93.3" lengthAdjust="spacingAndGlyphs">お申込み</text>
<rect x="639.4" y="821.0" width="458.5" height="79.3" fill="#6e97cc" stroke="#807c78" stroke-width="1.4"/>
<text x="810.3" y="869.0" font-size="23" fill="#fff" font-weight="700" style='font-family:"Noto Sans CJK JP","Liberation Sans",sans-serif' textLength="116.7" lengthAdjust="spacingAndGlyphs">企画・制作</text>
<rect x="639.4" y="932.0" width="458.5" height="79.2" fill="#6e97cc" stroke="#807c78" stroke-width="1.4"/>
<text x="763.9" y="979.9" font-size="23" fill="#fff" font-weight="700" style='font-family:"Noto Sans CJK JP","Liberation Sans",sans-serif' textLength="209.3" lengthAdjust="spacingAndGlyphs">納品・メンテナンス</text>
<line x1="869.3" y1="507.2" x2="869.3" y2="539.4" stroke="#595959" stroke-width="1.5"/>
<path d="M878.90 494.20 A9.6 9.6 0 1 0 874.81 502.06" fill="none" stroke="#595959" stroke-width="7.6"/>
<path d="M868.7 491.3 L889.5 491.1 L879.5 502.8 Z" fill="#595959"/>
<path d="M878.90 494.20 A9.6 9.6 0 1 0 875.85 501.22" fill="none" stroke="#fff" stroke-width="3.1"/>
<path d="M873.5 493.0 L885.1 492.9 L879.5 499.6 Z" fill="#fff"/>
<circle cx="639.4" cy="539.4" r="6.3" fill="#fff" stroke="#595959" stroke-width="2"/>
<circle cx="1097.9" cy="539.4" r="6.3" fill="#fff" stroke="#595959" stroke-width="2"/>
<circle cx="639.4" cy="579.1" r="6.3" fill="#fff" stroke="#595959" stroke-width="2"/>
<circle cx="1097.9" cy="579.1" r="6.3" fill="#fff" stroke="#595959" stroke-width="2"/>
<circle cx="639.4" cy="618.8" r="6.3" fill="#fff" stroke="#595959" stroke-width="2"/>
<circle cx="1097.9" cy="618.8" r="6.3" fill="#fff" stroke="#595959" stroke-width="2"/>
<circle cx="869.3" cy="539.4" r="6.3" fill="#fff" stroke="#595959" stroke-width="2"/>
<circle cx="869.3" cy="618.8" r="6.3" fill="#fff" stroke="#595959" stroke-width="2"/>
<line x1="869.3" y1="651.6" x2="869.3" y2="682.2" stroke="#595959" stroke-width="1.5"/>
<path d="M878.90 638.60 A9.6 9.6 0 1 0 874.81 646.46" fill="none" stroke="#595959" stroke-width="7.6"/>
<path d="M868.7 635.7 L889.5 635.5 L879.5 647.2 Z" fill="#595959"/>
<path d="M878.90 638.60 A9.6 9.6 0 1 0 875.85 645.62" fill="none" stroke="#fff" stroke-width="3.1"/>
<path d="M873.5 637.4 L885.1 637.3 L879.5 644.0 Z" fill="#fff"/>
<circle cx="639.4" cy="682.2" r="6.3" fill="#fff" stroke="#595959" stroke-width="2"/>
<circle cx="1097.9" cy="682.2" r="6.3" fill="#fff" stroke="#595959" stroke-width="2"/>
<circle cx="639.4" cy="721.8" r="6.3" fill="#fff" stroke="#595959" stroke-width="2"/>
<circle cx="1097.9" cy="721.8" r="6.3" fill="#fff" stroke="#595959" stroke-width="2"/>
<circle cx="639.4" cy="761.4" r="6.3" fill="#fff" stroke="#595959" stroke-width="2"/>
<circle cx="1097.9" cy="761.4" r="6.3" fill="#fff" stroke="#595959" stroke-width="2"/>
<circle cx="869.3" cy="682.2" r="6.3" fill="#fff" stroke="#595959" stroke-width="2"/>
<circle cx="869.3" cy="761.4" r="6.3" fill="#fff" stroke="#595959" stroke-width="2"/>
<line x1="869.3" y1="790.6" x2="869.3" y2="821.0" stroke="#595959" stroke-width="1.5"/>
<path d="M878.90 777.60 A9.6 9.6 0 1 0 874.81 785.46" fill="none" stroke="#595959" stroke-width="7.6"/>
<path d="M868.7 774.7 L889.5 774.5 L879.5 786.2 Z" fill="#595959"/>
<path d="M878.90 777.60 A9.6 9.6 0 1 0 875.85 784.62" fill="none" stroke="#fff" stroke-width="3.1"/>
<path d="M873.5 776.4 L885.1 776.3 L879.5 783.0 Z" fill="#fff"/>
<circle cx="639.4" cy="821.0" r="6.3" fill="#fff" stroke="#595959" stroke-width="2"/>
<circle cx="1097.9" cy="821.0" r="6.3" fill="#fff" stroke="#595959" stroke-width="2"/>
<circle cx="639.4" cy="860.6" r="6.3" fill="#fff" stroke="#595959" stroke-width="2"/>
<circle cx="1097.9" cy="860.6" r="6.3" fill="#fff" stroke="#595959" stroke-width="2"/>
<circle cx="639.4" cy="900.3" r="6.3" fill="#fff" stroke="#595959" stroke-width="2"/>
<circle cx="1097.9" cy="900.3" r="6.3" fill="#fff" stroke="#595959" stroke-width="2"/>
<circle cx="869.3" cy="821.0" r="6.3" fill="#fff" stroke="#595959" stroke-width="2"/>
<circle cx="869.3" cy="900.3" r="6.3" fill="#fff" stroke="#595959" stroke-width="2"/>
<line x1="869.3" y1="901.4" x2="869.3" y2="932.0" stroke="#595959" stroke-width="1.5"/>
<path d="M878.90 888.40 A9.6 9.6 0 1 0 874.81 896.26" fill="none" stroke="#595959" stroke-width="7.6"/>
<path d="M868.7 885.5 L889.5 885.3 L879.5 897.0 Z" fill="#595959"/>
<path d="M878.90 888.40 A9.6 9.6 0 1 0 875.85 895.42" fill="none" stroke="#fff" stroke-width="3.1"/>
<path d="M873.5 887.2 L885.1 887.1 L879.5 893.8 Z" fill="#fff"/>
<circle cx="639.4" cy="932.0" r="6.3" fill="#fff" stroke="#595959" stroke-width="2"/>
<circle cx="1097.9" cy="932.0" r="6.3" fill="#fff" stroke="#595959" stroke-width="2"/>
<circle cx="639.4" cy="971.6" r="6.3" fill="#fff" stroke="#595959" stroke-width="2"/>
<circle cx="1097.9" cy="971.6" r="6.3" fill="#fff" stroke="#595959" stroke-width="2"/>
<circle cx="639.4" cy="1011.2" r="6.3" fill="#fff" stroke="#595959" stroke-width="2"/>
<circle cx="1097.9" cy="1011.2" r="6.3" fill="#fff" stroke="#595959" stroke-width="2"/>
<circle cx="869.3" cy="932.0" r="6.3" fill="#fff" stroke="#595959" stroke-width="2"/>
<circle cx="869.3" cy="1011.2" r="6.3" fill="#fff" stroke="#595959" stroke-width="2"/>
<rect x="1160" y="352" width="268" height="416" rx="7" fill="#000" opacity="0.20" filter="url(#mshadow)"/>
<rect x="1157.0" y="347.2" width="268.4" height="416.0" fill="#ffffff" stroke="#a6a6a6" stroke-width="1.6" rx="6"/>
<path d="M1158.4 378.7 V353.4 Q1158.4 348.6 1163.2 348.6 H1418.2 Q1423 348.6 1423 353.4 V378.7 Z" fill="#e6e6e6"/>
<text x="1168.7" y="370.2" font-size="16.8" fill="#1f1f1f" font-weight="700" textLength="122.5" lengthAdjust="spacingAndGlyphs">オブジェクトの順序</text>
<rect x="1158.4" y="508.9" width="264.6" height="29.3" fill="#e6e6e6"/>
<text x="1168.7" y="530.1" font-size="16.8" fill="#1f1f1f" font-weight="700" textLength="161.5" lengthAdjust="spacingAndGlyphs">オブジェクトのグループ化</text>
<rect x="1158.4" y="634.2" width="264.6" height="29.6" fill="#e6e6e6"/>
<text x="1168.7" y="655.5" font-size="16.8" fill="#1f1f1f" font-weight="700" textLength="122.5" lengthAdjust="spacingAndGlyphs">オブジェクトの位置</text>
<rect x="1158.4" y="664.6" width="264.6" height="30.8" fill="#d2d2d2"/>
<text x="1200.7" y="402.9" font-size="17.2" fill="#262626" font-weight="500" textLength="114.7" lengthAdjust="spacingAndGlyphs">最前面へ移動(<tspan text-decoration="underline">R</tspan>)</text>
<text x="1200.7" y="434.9" font-size="17.2" fill="#262626" font-weight="500" textLength="114.7" lengthAdjust="spacingAndGlyphs">最背面へ移動(<tspan text-decoration="underline">K</tspan>)</text>
<text x="1200.7" y="466.7" font-size="17.2" fill="#262626" font-weight="500" textLength="97.5" lengthAdjust="spacingAndGlyphs">前面へ移動(<tspan text-decoration="underline">F</tspan>)</text>
<text x="1200.7" y="498.5" font-size="17.2" fill="#262626" font-weight="500" textLength="99.1" lengthAdjust="spacingAndGlyphs">背面へ移動(<tspan text-decoration="underline">B</tspan>)</text>
<text x="1200.7" y="560.3" font-size="17.2" fill="#262626" font-weight="500" textLength="89.7" lengthAdjust="spacingAndGlyphs">グループ化(<tspan text-decoration="underline">G</tspan>)</text>
<text x="1200.7" y="592.1" font-size="17.2" fill="#b4b4b4" font-weight="500" textLength="105.3" lengthAdjust="spacingAndGlyphs">グループ解除(<tspan text-decoration="underline">U</tspan>)</text>
<text x="1200.7" y="623.3" font-size="17.2" fill="#b4b4b4" font-weight="500" textLength="103.0" lengthAdjust="spacingAndGlyphs">再グループ化(<tspan text-decoration="underline">E</tspan>)</text>
<text x="1200.7" y="685.5" font-size="17.2" fill="#262626" font-weight="500" textLength="54.6" lengthAdjust="spacingAndGlyphs">配置(<tspan text-decoration="underline">A</tspan>)</text>
<text x="1200.7" y="717.5" font-size="17.2" fill="#262626" font-weight="500" textLength="55.3" lengthAdjust="spacingAndGlyphs">回転(<tspan text-decoration="underline">O</tspan>)</text>
<line x1="1200.0" y1="728.9" x2="1424.0" y2="728.9" stroke="#e1e1e1" stroke-width="1.3"/>
<text x="1200.7" y="751.9" font-size="17.2" fill="#262626" font-weight="500" textLength="191.1" lengthAdjust="spacingAndGlyphs">オブジェクトの選択と表示(<tspan text-decoration="underline">P</tspan>)...</text>
<path d="M1406.2 675.8 L1412 680.2 L1406.2 684.6 Z" fill="#222"/>
<path d="M1406.2 707 L1412 711.4 L1406.2 715.8 Z" fill="#222"/>
<rect x="1167.0" y="391.0" width="12.1" height="11.6" fill="#efc67a"/>
<path d="M1163.6 394.4 V387.6 H1170.8 M1175.2 405.6 H1182.8 V399.2" fill="none" stroke="#5e5e5e" stroke-width="1.8"/>
<rect x="1172.8" y="422.8" width="6.3" height="6.2" fill="#efc67a"/>
<rect x="1167.0" y="428.4" width="6.6" height="5.8" fill="#efc67a"/>
<rect x="1164.2" y="419.8" width="6.2" height="5.8" fill="#fff" stroke="#5e5e5e" stroke-width="1.7" rx="1.2"/>
<rect x="1175.8" y="431.4" width="6.4" height="6.0" fill="#fff" stroke="#5e5e5e" stroke-width="1.7" rx="1.2"/>
<rect x="1164.7" y="451.8" width="13.1" height="12.7" fill="#efc67a"/>
<path d="M1172.4 469 H1182.8 V460" fill="none" stroke="#5e5e5e" stroke-width="1.8"/>
<rect x="1164.7" y="483.6" width="13.1" height="12.1" fill="#efc67a"/>
<rect x="1172.8" y="491.8" width="9.6" height="8.8" fill="#fff" stroke="#5e5e5e" stroke-width="1.8" rx="1.2"/>
<rect x="1165.0" y="546.2" width="12.2" height="10.4" fill="none" stroke="#555" stroke-width="1.7" rx="0.5"/>
<rect x="1170.4" y="551.6" width="12.2" height="10.4" fill="none" stroke="#555" stroke-width="1.7" rx="0.5"/>
<rect x="1163.1" y="544.2" width="4.0" height="3.9" fill="#1f63ad"/>
<rect x="1180.5" y="544.2" width="4.0" height="3.9" fill="#1f63ad"/>
<rect x="1163.1" y="560.0" width="4.0" height="3.9" fill="#1f63ad"/>
<rect x="1180.5" y="560.0" width="4.0" height="3.9" fill="#1f63ad"/>
<path d="M1165 587.6 V578.6 H1177 V583" fill="none" stroke="#adadad" stroke-width="1.3"/>
<rect x="1163.4" y="577.0" width="3.4" height="3.4" fill="#adadad"/>
<rect x="1175.4" y="577.0" width="3.4" height="3.4" fill="#adadad"/>
<rect x="1163.4" y="586.4" width="3.4" height="3.4" fill="#adadad"/>
<rect x="1171.4" y="585.0" width="10.8" height="9.4" fill="#f4eff6" stroke="#adadad" stroke-width="1.3"/>
<rect x="1169.6" y="583.2" width="3.4" height="3.4" fill="#adadad"/>
<rect x="1180.6" y="583.2" width="3.4" height="3.4" fill="#adadad"/>
<rect x="1169.6" y="592.8" width="3.4" height="3.4" fill="#adadad"/>
<rect x="1180.6" y="592.8" width="3.4" height="3.4" fill="#adadad"/>
<path d="M1165 612 V610 H1177 V615" fill="#f4eff6" stroke="#adadad" stroke-width="1.3"/>
<rect x="1163.4" y="608.4" width="3.4" height="3.4" fill="#adadad"/>
<rect x="1175.4" y="608.4" width="3.4" height="3.4" fill="#adadad"/>
<rect x="1171.4" y="616.4" width="10.8" height="9.6" fill="#f4eff6" stroke="#adadad" stroke-width="1.3"/>
<rect x="1180.6" y="614.8" width="3.4" height="3.4" fill="#adadad"/>
<rect x="1169.6" y="624.4" width="3.4" height="3.4" fill="#adadad"/>
<rect x="1180.6" y="624.4" width="3.4" height="3.4" fill="#adadad"/>
<path d="M1164.2 621.8 C1163.6 618 1166.6 616.6 1169.6 617.2 M1167.6 614.8 L1170.2 617.4 L1167.4 619.6" fill="none" stroke="#adadad" stroke-width="1.4" stroke-linejoin="round" stroke-linecap="round"/>
<line x1="1167.6" y1="670.9" x2="1167.6" y2="689.2" stroke="#777" stroke-width="1.4"/>
<rect x="1170.6" y="671.6" width="7.0" height="2.8" fill="#eee" stroke="#8a8a8a" stroke-width="1.2" rx="1.2"/>
<rect x="1170.3" y="676.3" width="11.5" height="4.9" fill="#efc67a"/>
<path d="M1179 686.1 H1171 M1173.8 683.4 L1170.8 686.1 L1173.8 688.8" fill="none" stroke="#3d7cc0" stroke-width="1.6" stroke-linejoin="round" stroke-linecap="round"/>
<path d="M1168 708.6 C1168.4 706 1170.4 705.2 1172.4 705.4" fill="none" stroke="#3d7cc0" stroke-width="1.7" stroke-linecap="round"/>
<path d="M1171.6 703.4 L1174.4 705.6 L1171.4 707.6 Z" fill="#3d7cc0"/>
<path d="M1163.8 717.6 H1174.2 V711.2 Z" fill="#fff" stroke="#c2c2c2" stroke-width="1.1"/>
<path d="M1176.9 704.3 V717.7 H1184.3 Z" fill="#555"/>
<path d="M1172 736.2 H1163.8 V743.8 H1169.4" fill="none" stroke="#5e5e5e" stroke-width="1.4"/>
<rect x="1163.8" y="748.6" width="8.0" height="7.8" fill="none" stroke="#5e5e5e" stroke-width="1.4" rx="0.6"/>
<path d="M1172.4 746.6 V739.4 H1180 V743" fill="none" stroke="#f0b95a" stroke-width="1.9"/>
<path d="M1175.2 740.6 V754 L1178 751.4 L1180 756 L1182 755 L1180 750.6 H1183.6 Z" fill="#fff" stroke="#555" stroke-width="1.2" stroke-linejoin="round" stroke-linecap="round"/>
<rect x="1428" y="671" width="276" height="328" rx="7" fill="#000" opacity="0.20" filter="url(#mshadow)"/>
<rect x="1424.8" y="665.2" width="275.6" height="328.1" fill="#ffffff" stroke="#a6a6a6" stroke-width="1.6" rx="6.5"/>
<text x="1468.8" y="688.5" font-size="16.8" fill="#262626" font-weight="500" textLength="64.8" lengthAdjust="spacingAndGlyphs">左揃え(<tspan text-decoration="underline">L</tspan>)</text>
<text x="1468.8" y="720.5" font-size="16.8" fill="#262626" font-weight="500" textLength="113.9" lengthAdjust="spacingAndGlyphs">左右中央揃え(<tspan text-decoration="underline">C</tspan>)</text>
<text x="1468.8" y="752.3" font-size="16.8" fill="#262626" font-weight="500" textLength="66.3" lengthAdjust="spacingAndGlyphs">右揃え(<tspan text-decoration="underline">R</tspan>)</text>
<line x1="1468.8" y1="762.6" x2="1697.6" y2="762.6" stroke="#e1e1e1" stroke-width="1.3"/>
<text x="1468.8" y="786.5" font-size="16.8" fill="#262626" font-weight="500" textLength="66.3" lengthAdjust="spacingAndGlyphs">上揃え(<tspan text-decoration="underline">T</tspan>)</text>
<text x="1468.8" y="818.5" font-size="16.8" fill="#262626" font-weight="500" textLength="116.2" lengthAdjust="spacingAndGlyphs">上下中央揃え(<tspan text-decoration="underline">M</tspan>)</text>
<text x="1468.8" y="849.7" font-size="16.8" fill="#262626" font-weight="500" textLength="66.3" lengthAdjust="spacingAndGlyphs">下揃え(<tspan text-decoration="underline">B</tspan>)</text>
<line x1="1468.8" y1="861.0" x2="1697.6" y2="861.0" stroke="#e1e1e1" stroke-width="1.3"/>
<text x="1468.8" y="883.5" font-size="16.8" fill="#262626" font-weight="500" textLength="99.0" lengthAdjust="spacingAndGlyphs">左右に整列(<tspan text-decoration="underline">H</tspan>)</text>
<text x="1468.8" y="915.5" font-size="16.8" fill="#262626" font-weight="500" textLength="97.9" lengthAdjust="spacingAndGlyphs">上下に整列(<tspan text-decoration="underline">V</tspan>)</text>
<line x1="1468.8" y1="926.6" x2="1697.6" y2="926.6" stroke="#e1e1e1" stroke-width="1.3"/>
<text x="1468.8" y="950.1" font-size="16.6" fill="#262626" font-weight="500" textLength="165.2" lengthAdjust="spacingAndGlyphs">スライドに合わせて配置(<tspan text-decoration="underline">A</tspan>)</text>
<text x="1468.8" y="981.5" font-size="16.6" fill="#262626" font-weight="500" textLength="198.0" lengthAdjust="spacingAndGlyphs">選択したオブジェクトを揃える(<tspan text-decoration="underline">O</tspan>)</text>
<path d="M1434.4 977.4 L1439.2 982.2 L1449.8 971.4" fill="none" stroke="#333" stroke-width="1.6" stroke-linejoin="round" stroke-linecap="round"/>
<line x1="1434.5" y1="673.6" x2="1434.5" y2="691.8" stroke="#6e6e6e" stroke-width="1.4"/>
<rect x="1437.5" y="674.2" width="6.7" height="2.8" fill="none" stroke="#6e6e6e" stroke-width="1.3" rx="1.2"/>
<rect x="1437.5" y="679.8" width="10.5" height="3.8" fill="none" stroke="#6e6e6e" stroke-width="1.3" rx="1.4"/>
<path d="M1445.6 688.7 H1437.6 M1440.4 686 L1437.4 688.7 L1440.4 691.4" fill="none" stroke="#3d7cc0" stroke-width="1.6" stroke-linejoin="round" stroke-linecap="round"/>
<line x1="1441.2" y1="705.2" x2="1441.2" y2="723.9" stroke="#6e6e6e" stroke-width="1.3"/>
<rect x="1437.2" y="708.6" width="8.2" height="3.6" fill="#fff" stroke="#6e6e6e" stroke-width="1.3" rx="1.2"/>
<rect x="1434.6" y="715.2" width="13.4" height="5.4" fill="#fff" stroke="#6e6e6e" stroke-width="1.3" rx="1.4"/>
<line x1="1449.4" y1="736.9" x2="1449.4" y2="755.1" stroke="#6e6e6e" stroke-width="1.4"/>
<rect x="1440.0" y="737.6" width="6.8" height="2.8" fill="none" stroke="#6e6e6e" stroke-width="1.3" rx="1.2"/>
<rect x="1435.8" y="743.0" width="11.0" height="3.8" fill="none" stroke="#6e6e6e" stroke-width="1.3" rx="1.4"/>
<path d="M1435.6 752.3 H1443.8 M1441 749.6 L1444 752.3 L1441 755" fill="none" stroke="#3d7cc0" stroke-width="1.6" stroke-linejoin="round" stroke-linecap="round"/>
<line x1="1432.8" y1="772.8" x2="1451.0" y2="772.8" stroke="#6e6e6e" stroke-width="1.4"/>
<rect x="1433.6" y="776.0" width="2.4" height="6.2" fill="none" stroke="#6e6e6e" stroke-width="1.2" rx="0.8"/>
<rect x="1438.6" y="776.0" width="4.2" height="10.4" fill="none" stroke="#6e6e6e" stroke-width="1.3" rx="1"/>
<path d="M1448.2 783.8 V777.2 M1445.6 779.6 L1448.2 776.8 L1450.8 779.6" fill="none" stroke="#3d7cc0" stroke-width="1.6" stroke-linejoin="round" stroke-linecap="round"/>
<line x1="1432.8" y1="811.6" x2="1451.0" y2="811.6" stroke="#6e6e6e" stroke-width="1.3"/>
<rect x="1436.0" y="807.6" width="3.6" height="7.8" fill="#fff" stroke="#6e6e6e" stroke-width="1.3" rx="1"/>
<rect x="1442.4" y="805.0" width="5.8" height="12.8" fill="#fff" stroke="#6e6e6e" stroke-width="1.3" rx="1.2"/>
<line x1="1432.8" y1="850.0" x2="1451.0" y2="850.0" stroke="#6e6e6e" stroke-width="1.4"/>
<rect x="1433.6" y="840.4" width="2.4" height="6.8" fill="none" stroke="#6e6e6e" stroke-width="1.2" rx="0.8"/>
<rect x="1438.6" y="836.8" width="4.2" height="10.4" fill="none" stroke="#6e6e6e" stroke-width="1.3" rx="1"/>
<path d="M1448.2 839.6 V846.6 M1445.6 844.2 L1448.2 847 L1450.8 844.2" fill="none" stroke="#3d7cc0" stroke-width="1.6" stroke-linejoin="round" stroke-linecap="round"/>
<rect x="1432.2" y="873.8" width="3.6" height="10.2" fill="none" stroke="#6e6e6e" stroke-width="1.3" rx="0.8"/>
<rect x="1438.6" y="872.4" width="5.2" height="13.0" fill="none" stroke="#6e6e6e" stroke-width="1.3" rx="1"/>
<rect x="1446.8" y="876.0" width="3.6" height="5.8" fill="none" stroke="#6e6e6e" stroke-width="1.3" rx="0.8"/>
<line x1="1435.8" y1="879.0" x2="1438.6" y2="879.0" stroke="#6e6e6e" stroke-width="1.2"/>
<line x1="1443.8" y1="879.0" x2="1446.8" y2="879.0" stroke="#6e6e6e" stroke-width="1.2"/>
<rect x="1440.0" y="900.2" width="5.2" height="3.2" fill="none" stroke="#6e6e6e" stroke-width="1.3" rx="0.8"/>
<rect x="1436.0" y="906.6" width="13.2" height="5.2" fill="none" stroke="#6e6e6e" stroke-width="1.3" rx="1"/>
<rect x="1437.8" y="915.2" width="9.8" height="3.6" fill="none" stroke="#6e6e6e" stroke-width="1.3" rx="0.8"/>
<line x1="1442.6" y1="903.4" x2="1442.6" y2="906.6" stroke="#6e6e6e" stroke-width="1.2"/>
<line x1="1442.6" y1="911.8" x2="1442.6" y2="915.2" stroke="#6e6e6e" stroke-width="1.2"/>
</g></g>
<rect x="965.0" y="213.9" width="119.8" height="37.9" fill="none" stroke="#6c97cc" stroke-width="5.6"/>
<rect x="1151.0" y="252.1" width="65.8" height="93.1" fill="none" stroke="#6c97cc" stroke-width="5.6"/>
<line x1="211.0" y1="230.8" x2="962.0" y2="230.8" stroke="#6c97cc" stroke-width="5.4"/>
<circle cx="962.0" cy="230.8" r="7.0" fill="#6c97cc"/>
<line x1="1216.3" y1="301.8" x2="1802.0" y2="304.3" stroke="#6c97cc" stroke-width="5.2"/>
<circle cx="1216.3" cy="301.8" r="7.0" fill="#6c97cc"/>
<circle cx="211.2" cy="230.5" r="44.3" fill="#6c97cc"/>
<circle cx="1802.4" cy="304.2" r="44.3" fill="#6c97cc"/>
<text transform="translate(211.9 250.4) scale(1.15 1)" x="0" y="0" text-anchor="middle" font-size="43.2" font-weight="800" fill="#fff" style='font-family:"NanumGothic","Liberation Sans",sans-serif'>1</text>
<text transform="translate(1803.4 324.1) scale(1.36 1)" x="0" y="0" text-anchor="middle" font-size="42" font-weight="800" fill="#fff" style='font-family:"NanumGothic","Liberation Sans",sans-serif'>2</text>
</svg>
</body></html>
